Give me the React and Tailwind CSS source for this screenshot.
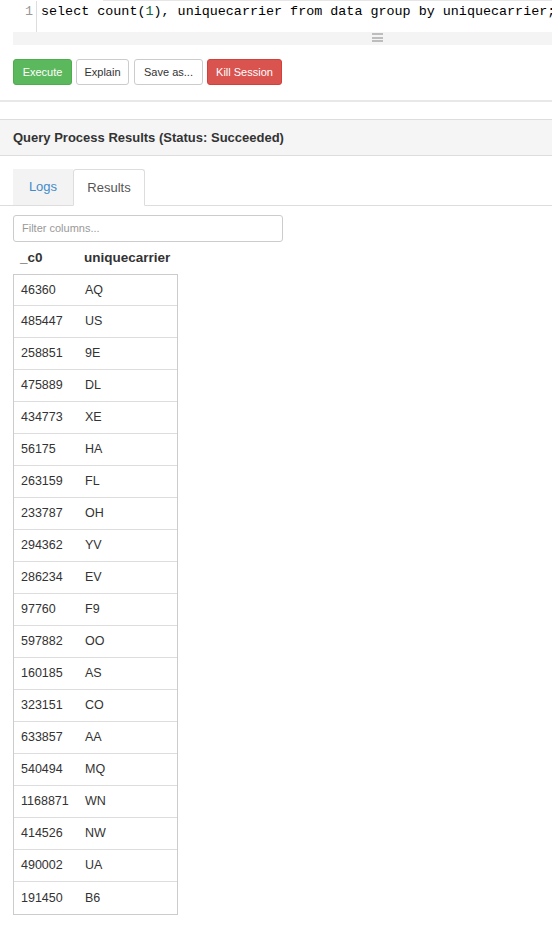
const rows = [
  ["46360", "AQ"],
  ["485447", "US"],
  ["258851", "9E"],
  ["475889", "DL"],
  ["434773", "XE"],
  ["56175", "HA"],
  ["263159", "FL"],
  ["233787", "OH"],
  ["294362", "YV"],
  ["286234", "EV"],
  ["97760", "F9"],
  ["597882", "OO"],
  ["160185", "AS"],
  ["323151", "CO"],
  ["633857", "AA"],
  ["540494", "MQ"],
  ["1168871", "WN"],
  ["414526", "NW"],
  ["490002", "UA"],
  ["191450", "B6"],
];

function Editor() {
  return (
    <div className="ml-[13px] overflow-hidden">
      <div className="ml-[90px] h-px bg-[#e6e6e6]" />
      <div className="flex h-[31px]">
        <div className="w-[24px] shrink-0 border-r border-[#dddddd] pr-[3px] pt-[2px] text-right font-['Liberation_Mono',monospace] text-[13.4px] leading-[17px] text-[#999999]">
          1
        </div>
        <div className="whitespace-nowrap pl-[4px] pt-[2px] font-['Liberation_Mono',monospace] text-[13.4px] leading-[17px] text-black">
          select count(<span className="text-[#116644]">1</span>), uniquecarrier from data group by uniquecarrier;
        </div>
      </div>
      <div className="flex h-[13px] bg-[#f4f4f4] pl-[359px] pt-[1px]">
        <div className="flex w-[11px] flex-col gap-[1.5px]">
          <div className="h-[2px] bg-[#bdbdbd]" />
          <div className="h-[2px] bg-[#bdbdbd]" />
          <div className="h-[2px] bg-[#bdbdbd]" />
        </div>
      </div>
    </div>
  );
}

function Btn({ children, className }) {
  return (
    <button
      className={
        "flex h-[26px] items-center justify-center rounded-[3px] border text-[11px] leading-none " +
        className
      }
    >
      {children}
    </button>
  );
}

export default function App() {
  return (
    <div className="min-h-[934px] w-[552px] overflow-hidden bg-white font-['Liberation_Sans',Arial,sans-serif] text-[#333333]">
      <Editor />

      <div className="mt-[14px] flex px-[13px]">
        <Btn className="w-[59px] border-[#4cae4c] bg-[#5cb85c] text-white">Execute</Btn>
        <Btn className="ml-[4px] w-[53px] border-[#cccccc] bg-white text-[#333333]">Explain</Btn>
        <Btn className="ml-[5px] w-[69px] border-[#cccccc] bg-white text-[#333333]">Save as...</Btn>
        <Btn className="ml-[4px] w-[75px] border-[#d43f3a] bg-[#d9534f] text-white">Kill Session</Btn>
      </div>

      <div className="mt-[15px] h-[2px] bg-[#e8e8e8]" />

      <div className="mt-[17px] flex h-[37px] items-center border-y border-[#dddddd] bg-[#f5f5f5] px-[13px] text-[13px] font-bold text-[#333333]">
        Query Process Results (Status: Succeeded)
      </div>

      <div className="mt-[13px] flex h-[37px] items-end border-b border-[#dddddd] pl-[13px]">
        <div className="flex h-[36px] w-[60px] items-center justify-center bg-[#f3f3f3] text-[13px] text-[#428bca]">
          Logs
        </div>
        <div className="-mb-px flex h-[37px] w-[72px] items-center justify-center rounded-t-[3px] border border-b-white border-[#dddddd] bg-white text-[13px] text-[#555555]">
          Results
        </div>
      </div>

      <div className="px-[13px] pt-[9px]">
        <div className="flex h-[27px] w-[270px] items-center rounded-[3px] border border-[#cccccc] px-[8px] text-[11px] text-[#999999]">
          Filter columns...
        </div>

        <div className="flex h-[32px] items-center text-[13.5px] font-bold text-[#333333]">
          <div className="w-[71px] pl-[7px]">_c0</div>
          <div>uniquecarrier</div>
        </div>

        <div className="w-[165px] border border-[#cccccc]">
          {rows.map(([a, b], i) => (
            <div
              key={i}
              className={
                "flex items-center text-[12.5px] text-[#333333] " +
                (i === 0 ? "h-[31px] " : "h-[32px] ") +
                (i < rows.length - 1 ? "border-b border-[#dddddd]" : "")
              }
            >
              <div className="w-[71px] pl-[7px]">{a}</div>
              <div>{b}</div>
            </div>
          ))}
        </div>
      </div>
    </div>
  );
}
